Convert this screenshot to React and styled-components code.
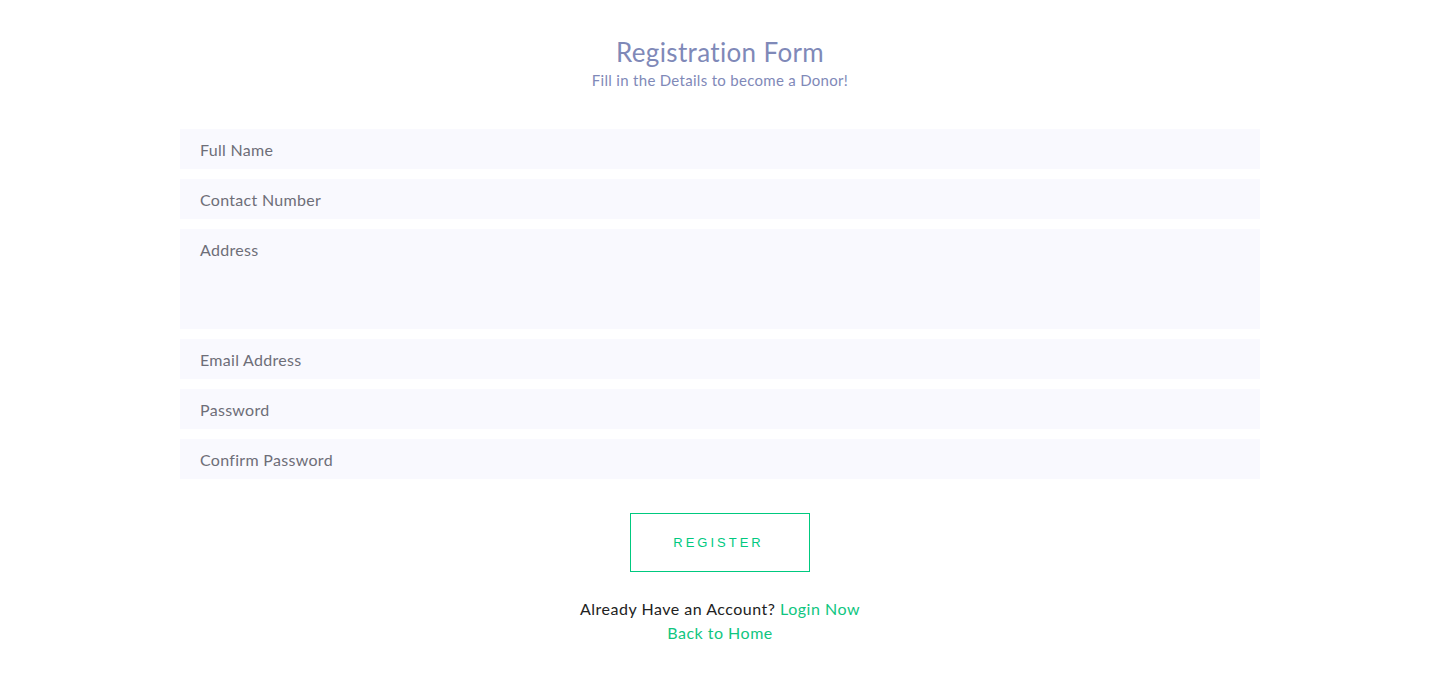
import React from "react";
import styled, { createGlobalStyle } from "styled-components";

const GlobalStyle = createGlobalStyle`
  body {
    margin: 0;
    background: #fff;
    font-family: Lato, "Open Sans", sans-serif;
    letter-spacing: 0.3px;
  }
`;

const Wrapper = styled.div`
  width: 1080px;
  margin: 0 auto;
  padding-top: 34px;
  display: flex;
  flex-direction: column;
  align-items: center;
`;

const Title = styled.h2`
  margin: 0;
  font-size: 26px;
  font-weight: 400;
  line-height: 36px;
  letter-spacing: 0.35px;
  color: #7f89b8;
`;

const Subtitle = styled.p`
  margin: 0;
  font-size: 15px;
  line-height: 20px;
  color: #7f89b8;
`;

const Form = styled.form`
  width: 100%;
  margin-top: 39px;
  display: flex;
  flex-direction: column;
  gap: 10px;
`;

const Field = styled.input`
  box-sizing: border-box;
  width: 100%;
  height: 40px;
  border: none;
  outline: none;
  background: #f9f9fe;
  padding: 0 20px;
  font-family: inherit;
  font-size: 16px;
  letter-spacing: 0.3px;
  color: #333;
  &::placeholder {
    color: #6e6e78;
  }
`;

const Area = styled.textarea`
  box-sizing: border-box;
  width: 100%;
  height: 100px;
  border: none;
  outline: none;
  resize: none;
  background: #f9f9fe;
  padding: 10px 20px;
  font-family: inherit;
  font-size: 16px;
  line-height: 22px;
  letter-spacing: 0.3px;
  &::placeholder {
    color: #6e6e78;
  }
`;

const Button = styled.button`
  margin-top: 34px;
  width: 180px;
  height: 59px;
  background: #fff;
  border: 1px solid #00c97f;
  color: #00c97f;
  font-family: "Liberation Sans", Arial, sans-serif;
  font-size: 13px;
  letter-spacing: 3px;
  padding-left: 3px;
  cursor: pointer;
`;

const Footer = styled.div`
  margin-top: 25px;
  display: flex;
  flex-direction: column;
  align-items: center;
  font-size: 16px;
  line-height: 24px;
  letter-spacing: 0.5px;
  color: #222;
`;

const Green = styled.a`
  color: #10c67f;
  text-decoration: none;
`;

export default function App() {
  return (
    <>
      <GlobalStyle />
      <Wrapper>
        <Title>Registration Form</Title>
        <Subtitle>Fill in the Details to become a Donor!</Subtitle>
        <Form>
          <Field placeholder="Full Name" />
          <Field placeholder="Contact Number" />
          <Area placeholder="Address" />
          <Field placeholder="Email Address" />
          <Field placeholder="Password" type="password" />
          <Field placeholder="Confirm Password" type="password" />
        </Form>
        <Button type="button">REGISTER</Button>
        <Footer>
          <span>
            Already Have an Account? <Green href="#">Login Now</Green>
          </span>
          <Green href="#">Back to Home</Green>
        </Footer>
      </Wrapper>
    </>
  );
}
